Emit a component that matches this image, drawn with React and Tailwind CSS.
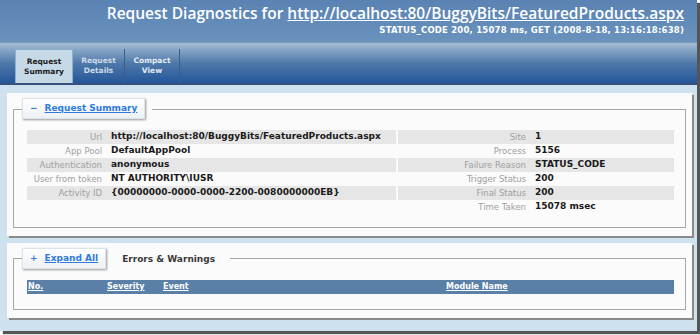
import React from 'react';

const leftRows = [
  ['Url', 'http://localhost:80/BuggyBits/FeaturedProducts.aspx'],
  ['App Pool', 'DefaultAppPool'],
  ['Authentication', 'anonymous'],
  ['User from token', 'NT AUTHORITY\\IUSR'],
  ['Activity ID', '{00000000-0000-0000-2200-0080000000EB}'],
];

const rightRows = [
  ['Site', '1'],
  ['Process', '5156'],
  ['Failure Reason', 'STATUS_CODE'],
  ['Trigger Status', '200'],
  ['Final Status', '200'],
  ['Time Taken', '15078 msec'],
];

function InfoTable({ rows, labelWidth }) {
  return (
    <div className="flex flex-col flex-1">
      {rows.map(([label, value], i) => (
        <div key={label} className={`flex items-center h-[14px] ${i % 2 === 0 ? 'bg-[#e6e6e6]' : ''}`}>
          <div className={`${labelWidth} text-right text-[#a0a0a0] text-[8.5px] pr-[9px] shrink-0`}>{label}</div>
          <div className="font-bold text-[#1a1a1a] whitespace-nowrap">{value}</div>
        </div>
      ))}
    </div>
  );
}

function LegendButton({ children }) {
  return (
    <div className="bg-gradient-to-b from-white to-[#eef1f4] border border-[#dde3ea] shadow-[1px_1px_2px_#999] px-[7px] h-[21px] flex items-center gap-[7px]">
      {children}
    </div>
  );
}

export default function App() {
  return (
    <div className="w-[700px] h-[335px] bg-white" style={{ fontFamily: '"DejaVu Sans", Verdana, sans-serif' }}>
      <div className="w-[697px] h-[331px] bg-[#cde1ee] shadow-[3px_3px_1px_#555] flex flex-col overflow-hidden">
        {/* Header */}
        <div className="h-[42px] bg-gradient-to-b from-[#5a83b3] to-[#6a92bd] flex flex-col items-end pr-[13px] pt-[2px]">
          <div className="text-white text-[15.5px] font-semibold leading-[22px]" style={{ fontFamily: '"Open Sans", sans-serif' }}>
            Request Diagnostics for <span className="underline">http://localhost:80/BuggyBits/FeaturedProducts.aspx</span>
          </div>
          <div className="text-white text-[8.5px] font-bold leading-[13px] tracking-[0.2px]">
            STATUS_CODE 200, 15078 ms, GET (2008-8-18, 13:16:18:638)
          </div>
        </div>

        {/* Tabs */}
        <div className="h-[41px] bg-gradient-to-b from-[#a4bdd5] via-[#4f79a9] to-[#23569a] flex items-end pl-[15px] border-t border-[#7d9cc0]">
          <div className="w-[58px] h-[34px] bg-[#c6d9e7] border-t border-l border-r border-[#8fb0cc] flex items-center justify-center text-center text-[7.5px] font-bold leading-[10px] text-[#1a1a1a]">
            Request<br />Summary
          </div>
          <div className="w-[52px] h-[34px] flex items-center justify-center text-center text-[7.5px] font-bold leading-[10px] text-[#d0dcea] border-r border-[#3a5f8e]">
            Request<br />Details
          </div>
          <div className="w-[55px] h-[34px] flex items-center justify-center text-center text-[7.5px] font-bold leading-[10px] text-[#e4ecf4] border-r border-[#3a5f8e]">
            Compact<br />View
          </div>
        </div>
        <div className="h-[2px] bg-[#3b4f7e]" />

        {/* Body */}
        <div className="flex flex-col pl-[7px] pr-[5px] pt-[8px] gap-[7px] text-[9px]">
          {/* Panel 1 */}
          <div className="bg-[#fbfbfb] shadow-[2px_2px_0_#8a8a8a] h-[143px] pt-[5px] px-[6px] pb-[8px] flex flex-col">
            <div className="relative border border-[#a8a8a8] mt-[11px] flex-1 pt-[20px] pl-[13px] pr-[11px]">
              <div className="absolute -top-[12px] left-[8px] bg-[#fbfbfb] pr-[7px]">
                <LegendButton>
                  <span className="text-[#3a7ad8] font-bold text-[9px]">−</span>
                  <span className="text-[#2f7ae0] font-bold underline text-[9px]">Request Summary</span>
                </LegendButton>
              </div>
              <div className="flex gap-[2px]">
                <InfoTable rows={leftRows} labelWidth="w-[84px]" />
                <div className="w-[276px] shrink-0 flex">
                  <InfoTable rows={rightRows} labelWidth="w-[137px]" />
                </div>
              </div>
            </div>
          </div>

          {/* Panel 2 */}
          <div className="bg-[#fbfbfb] shadow-[2px_2px_0_#8a8a8a] h-[75px] pt-[5px] px-[6px] pb-[8px] flex flex-col">
            <div className="relative border border-[#a8a8a8] mt-[10px] flex-1 pt-[21px] pl-[13px] pr-[11px]">
              <div className="absolute -top-[11px] left-[8px] right-[0px] flex items-center">
                <div className="bg-[#fbfbfb] pr-[15px] flex items-center gap-[16px]">
                  <LegendButton>
                    <span className="text-[#3a7ad8] font-bold text-[9px]">+</span>
                    <span className="text-[#2f7ae0] font-bold underline text-[9px]">Expand All</span>
                  </LegendButton>
                  <span className="text-[#3a3a3a] font-bold text-[9px] pt-[2px]">Errors &amp; Warnings</span>
                </div>
              </div>
              <div className="h-[14px] bg-[#5b80a8] flex items-center text-white font-bold underline text-[8px]">
                <span className="w-[80px] pl-[1px]">No.</span>
                <span className="w-[56px]">Severity</span>
                <span className="w-[283px]">Event</span>
                <span>Module Name</span>
              </div>
            </div>
          </div>
        </div>
      </div>
    </div>
  );
}
